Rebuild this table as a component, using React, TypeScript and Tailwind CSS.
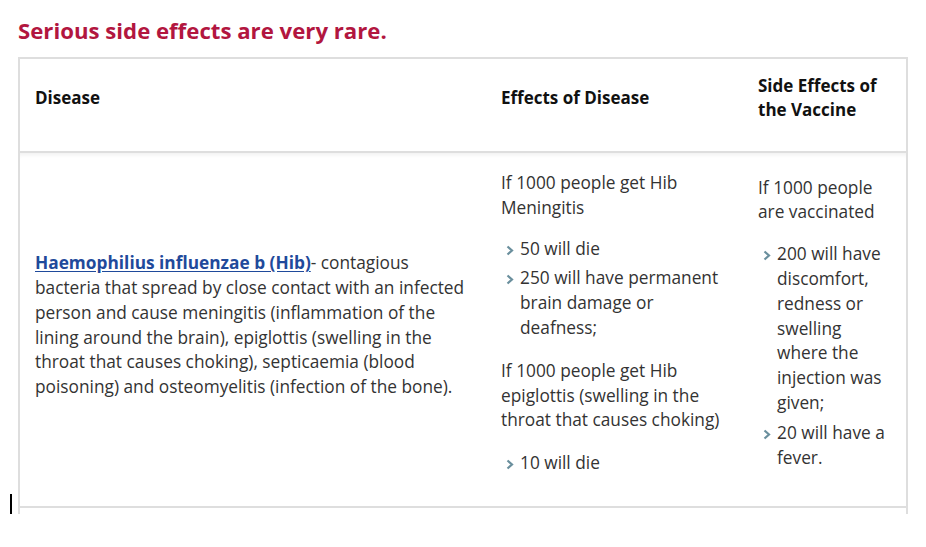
import React from 'react'

const Chevron: React.FC = () => (
  <svg width="8" height="11" viewBox="0 0 8 11" className="mt-[8px] shrink-0">
    <polyline
      points="1.5,1.5 6,5.5 1.5,9.5"
      fill="none"
      stroke="#6a8f9d"
      strokeWidth="2.2"
    />
  </svg>
)

const Bullets: React.FC<{ items: string[]; className?: string }> = ({ items, className }) => (
  <ul className={className}>
    {items.map((item, i) => (
      <li key={i} className={`flex ${i > 0 ? 'mt-[5px]' : ''}`}>
        <span className="flex w-[19px] shrink-0 pl-[5px]">
          <Chevron />
        </span>
        <span>{item}</span>
      </li>
    ))}
  </ul>
)

export default function App() {
  return (
    <div className="relative min-h-[547px] bg-white pl-[18px] pt-[17px] font-['Open_Sans',sans-serif]">
      <h2 className="text-[22.2px] font-bold leading-[28px] text-[#b2163f]">
        Serious side effects are very rare.
      </h2>

      <div className="mt-[12px] h-[457px] w-[890px] overflow-hidden border-x-2 border-t-2 border-[#dedede]">
        {/* header */}
        <div className="grid h-[94px] grid-cols-[464px_257px_1fr] border-b-2 border-[#dedede] text-[17px] font-bold leading-[24px] text-[#111]">
          <div className="flex items-center pb-[14px] pl-[15px]">Disease</div>
          <div className="flex items-center pb-[14px] pl-[17px]">Effects of Disease</div>
          <div className="flex items-center pb-[14px] pl-[17px] pr-[16px]">
            <span className="w-[140px]">Side Effects of the Vaccine</span>
          </div>
        </div>

        {/* body row */}
        <div className="grid h-[355px] grid-cols-[464px_257px_1fr] border-b-2 border-[#dedede] text-[17.3px] leading-[24.8px] text-[#333] shadow-[inset_0_5px_4px_-3px_rgba(0,0,0,0.06)]">
          <div className="flex items-center pb-[8px] pl-[15px]">
            <p className="w-[436px]">
              <a href="#" className="font-bold text-[#1f4a9b] underline underline-offset-2">
                Haemophilius influenzae b (Hib)
              </a>
              - contagious bacteria that spread by close contact with an infected person and cause
              meningitis (inflammation of the lining around the brain), epiglottis (swelling in the
              throat that causes choking), septicaemia (blood poisoning) and osteomyelitis
              (infection of the bone).
            </p>
          </div>

          <div className="flex items-center pb-[12px] pl-[17px]">
            <div className="w-[226px]">
              <p>If 1000 people get Hib Meningitis</p>
              <Bullets
                className="mt-[16px]"
                items={['50 will die', '250 will have permanent brain damage or deafness;']}
              />
              <p className="mt-[18px]">
                If 1000 people get Hib epiglottis (swelling in the throat that causes choking)
              </p>
              <Bullets className="mt-[18px]" items={['10 will die']} />
            </div>
          </div>

          <div className="flex items-center pb-[13px] pl-[17px]">
            <div className="w-[133px]">
              <p>If 1000 people are vaccinated</p>
              <Bullets
                className="mt-[17px]"
                items={[
                  '200 will have discomfort, redness or swelling where the injection was given;',
                  '20 will have a fever.',
                ]}
              />
            </div>
          </div>
        </div>
      </div>

      <span className="absolute left-[10px] top-[494px] h-[20px] w-[2px] bg-black" />
    </div>
  )
}
